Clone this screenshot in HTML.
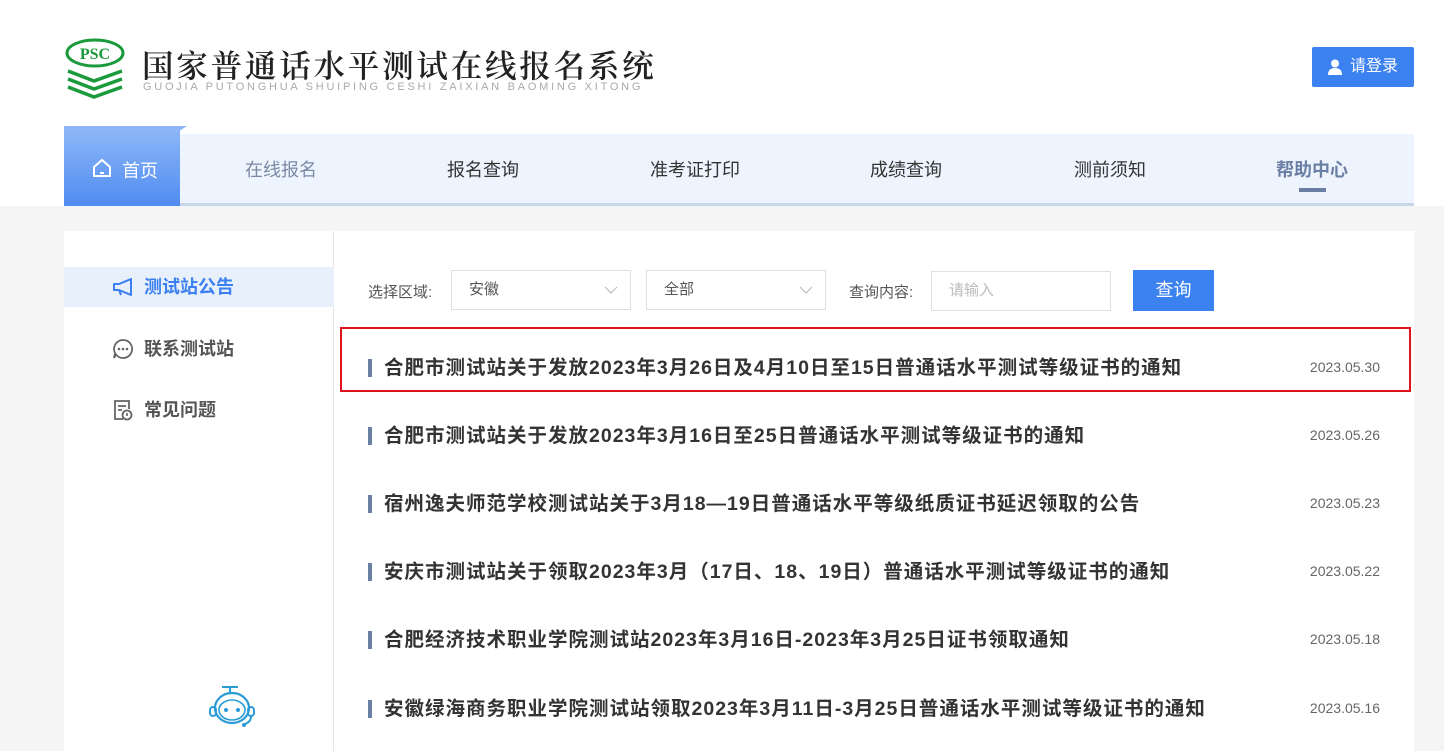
<!DOCTYPE html>
<html><head><meta charset="utf-8"><style>
*{margin:0;padding:0;box-sizing:border-box}
body{width:1444px;height:745px;overflow:hidden;background:#f5f5f5;font-family:"Liberation Sans","Noto Sans CJK SC",sans-serif;position:relative}
.top{position:absolute;left:0;top:0;width:1444px;height:206px;background:#fff}
.abs{position:absolute}
.nav{left:64px;top:134px;width:1350px;height:72px;background:#edf4fd;border-bottom:3px solid #c8d6e8}
.nav span{position:absolute;top:22px;font-size:18px;color:#333;transform:translateX(-50%);white-space:nowrap}
.home{left:64px;top:126px;width:116px;height:80px;background:linear-gradient(#8fb8f8,#4f8cf0)}
.card{left:64px;top:231px;width:1350px;height:520px;background:#fff}
.side{left:64px;top:231px;width:270px;height:520px;border-right:1px solid #e6e6e6}
.si{position:absolute;left:0;width:270px;height:40px;font-size:18px;font-weight:bold;color:#555;line-height:40px;padding-left:80px}
.lbl{font-size:15px;color:#555;top:281px}
.box{top:270px;height:40px;border:1px solid #dcdfe6;background:#fff;font-size:15px;color:#555;line-height:38px;padding-left:17px}
.item{position:absolute;left:368px;width:1030px;height:30px}
.item .b{position:absolute;left:0;top:6px;width:4px;height:18px;background:#6b80a5}
.item .t{position:absolute;left:16px;top:0;font-size:19.5px;font-weight:bold;color:#333;white-space:nowrap;line-height:30px;letter-spacing:1px}
.item .d{position:absolute;right:18px;top:6px;font-size:14px;color:#666}
</style></head><body>
<div class="top"></div>
<svg class="abs" style="left:64px;top:38px" width="62" height="62" viewBox="0 0 62 62">
<ellipse cx="31" cy="15" rx="28" ry="13" fill="none" stroke="#1a9a3a" stroke-width="3"/>
<text x="31" y="21" text-anchor="middle" font-family="Liberation Serif" font-weight="bold" font-size="16" fill="#1a9a3a">PSC</text>
<g stroke="#1a9a3a" stroke-width="3.5" fill="none"><path d="M4 33 L30 43 L58 33"/><path d="M4 41 L30 51 L58 41"/><path d="M4 49 L30 59 L58 49"/></g>
</svg>
<div class="abs" style="left:142px;top:42px;font-family:'Noto Serif CJK SC',serif;font-size:31.5px;font-weight:600;color:#222;letter-spacing:2.8px">国家普通话水平测试在线报名系统</div>
<div class="abs" style="left:143px;top:81px;font-size:11px;color:#aaa;letter-spacing:2.75px">GUOJIA PUTONGHUA SHUIPING CESHI ZAIXIAN BAOMING XITONG</div>
<div class="abs" style="left:1312px;top:47px;width:102px;height:40px;background:#3b82f0;border-radius:2px;color:#fff;font-size:16px;line-height:40px;padding-left:38px">请登录
<svg class="abs" style="left:16px;top:12px" width="14" height="16" viewBox="0 0 14 16"><circle cx="7" cy="4.5" r="4" fill="#fff"/><path d="M0 16 Q0 9 7 9 Q14 9 14 16Z" fill="#fff"/></svg></div>
<div class="abs nav">
<span style="left:217px;color:#7a8aa5">在线报名</span>
<span style="left:419px">报名查询</span>
<span style="left:631px">准考证打印</span>
<span style="left:842px">成绩查询</span>
<span style="left:1046px">测前须知</span>
<span style="left:1248px;color:#6b7fa5;font-weight:bold">帮助中心</span>
<div style="position:absolute;left:1235px;top:54px;width:27px;height:4px;background:#6b7fa5"></div>
</div>
<div class="abs" style="left:175px;top:126px;width:0;height:0;border-left:12px solid #8fb8f8;border-top:0;border-bottom:8px solid transparent"></div>
<div class="abs home"><svg class="abs" style="left:28px;top:32px" width="20" height="20" viewBox="0 0 20 20"><path d="M2 9 L10 2 L18 9 V18 H2Z" fill="none" stroke="#fff" stroke-width="2"/><path d="M8 15h4" stroke="#fff" stroke-width="2"/></svg><span style="position:absolute;left:58px;top:31px;color:#fff;font-size:18px">首页</span></div>
<div class="abs card"></div>
<div class="abs side">
<div class="si" style="top:36px;background:#e8f0fc;color:#3b7ff0">测试站公告</div>
<svg class="abs" style="left:48px;top:46px" width="22" height="20" viewBox="0 0 22 20"><path d="M2 7 H7 L19 2 V18 L7 13 H2Z M7 13 L9 18" fill="none" stroke="#3b7ff0" stroke-width="2" stroke-linejoin="round"/></svg>
<div class="si" style="top:98px">联系测试站</div>
<svg class="abs" style="left:48px;top:107px" width="22" height="22" viewBox="0 0 22 22"><path d="M11 2a9 9 0 1 1-7 14.5L2 20l1-5A9 9 0 0 1 11 2z" fill="none" stroke="#666" stroke-width="1.8"/><circle cx="7" cy="11" r="1.3" fill="#666"/><circle cx="11" cy="11" r="1.3" fill="#666"/><circle cx="15" cy="11" r="1.3" fill="#666"/></svg>
<div class="si" style="top:159px">常见问题</div>
<svg class="abs" style="left:49px;top:168px" width="20" height="22" viewBox="0 0 20 22"><path d="M10 20H2V2h14v8" fill="none" stroke="#666" stroke-width="1.8"/><path d="M5 7h8M5 11h4" stroke="#666" stroke-width="1.8"/><circle cx="14" cy="16" r="4.5" fill="none" stroke="#666" stroke-width="1.8"/><path d="M14 14v3" stroke="#666" stroke-width="1.6"/></svg>
<svg class="abs" style="left:142px;top:452px" width="60" height="48" viewBox="0 0 60 48"><path d="M16 4h16M24 4v5" stroke="#2a9bd4" stroke-width="2"/><ellipse cx="26" cy="25" rx="17" ry="15" fill="none" stroke="#2a9bd4" stroke-width="2.2"/><ellipse cx="26" cy="27" rx="13" ry="10" fill="none" stroke="#2a9bd4" stroke-width="1.6"/><circle cx="20" cy="27" r="2" fill="#2a9bd4"/><circle cx="32" cy="27" r="2" fill="#2a9bd4"/><rect x="4" y="24" width="6" height="9" rx="3" fill="none" stroke="#2a9bd4" stroke-width="2"/><rect x="42" y="24" width="6" height="9" rx="3" fill="none" stroke="#2a9bd4" stroke-width="2"/><path d="M45 33q0 6-6 8" fill="none" stroke="#2a9bd4" stroke-width="2"/><circle cx="38" cy="42" r="2" fill="#2a9bd4"/></svg>
</div>
<div class="abs lbl" style="left:368px">选择区域:</div>
<div class="abs box" style="left:451px;width:180px">安徽<svg class="abs" style="right:12px;top:15px" width="14" height="8"><path d="M1 1l6 6 6-6" fill="none" stroke="#bbb" stroke-width="1.2"/></svg></div>
<div class="abs box" style="left:646px;width:180px">全部<svg class="abs" style="right:12px;top:15px" width="14" height="8"><path d="M1 1l6 6 6-6" fill="none" stroke="#bbb" stroke-width="1.2"/></svg></div>
<div class="abs lbl" style="left:849px">查询内容:</div>
<div class="abs box" style="left:931px;top:271px;width:180px;color:#bbb">请输入</div>
<div class="abs" style="left:1133px;top:270px;width:81px;height:41px;background:#3b82f0;color:#fff;font-size:18px;line-height:41px;text-align:center">查询</div>
<div class="abs" style="left:340px;top:327px;width:1071px;height:65px;border:2px solid #e0121e"></div>
<div class="item" style="top:353px"><div class="b"></div><div class="t">合肥市测试站关于发放2023年3月26日及4月10日至15日普通话水平测试等级证书的通知</div><div class="d">2023.05.30</div></div>
<div class="item" style="top:421px"><div class="b"></div><div class="t">合肥市测试站关于发放2023年3月16日至25日普通话水平测试等级证书的通知</div><div class="d">2023.05.26</div></div>
<div class="item" style="top:489px"><div class="b"></div><div class="t">宿州逸夫师范学校测试站关于3月18—19日普通话水平等级纸质证书延迟领取的公告</div><div class="d">2023.05.23</div></div>
<div class="item" style="top:557px"><div class="b"></div><div class="t">安庆市测试站关于领取2023年3月（17日、18、19日）普通话水平测试等级证书的通知</div><div class="d">2023.05.22</div></div>
<div class="item" style="top:625px"><div class="b"></div><div class="t">合肥经济技术职业学院测试站2023年3月16日-2023年3月25日证书领取通知</div><div class="d">2023.05.18</div></div>
<div class="item" style="top:694px"><div class="b"></div><div class="t">安徽绿海商务职业学院测试站领取2023年3月11日-3月25日普通话水平测试等级证书的通知</div><div class="d">2023.05.16</div></div>
</body></html>
